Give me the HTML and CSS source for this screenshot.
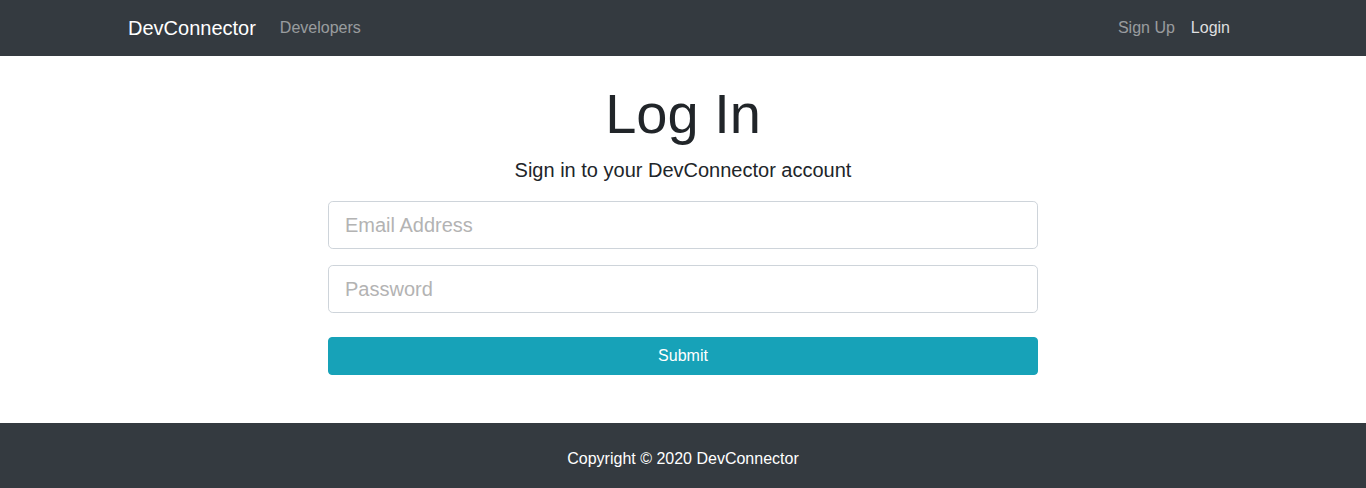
FILE: index.html
```html
<!DOCTYPE html>
<html lang="en">
<head>
    <meta charset="UTF-8">
    <meta name="viewport" content="width=device-width, initial-scale=1.0">
    <title>DevConnector</title>
    <link rel="stylesheet" href="styles.css">
</head>
<body>
    <nav class="navbar">
        <div class="container nav-inner">
            <a class="brand" href="#">DevConnector</a>
            <ul class="nav-links">
                <li><a class="nav-link" href="#">Developers</a></li>
            </ul>
            <ul class="nav-links nav-right">
                <li><a class="nav-link" href="#">Sign Up</a></li>
                <li><a class="nav-link active" href="#">Login</a></li>
            </ul>
        </div>
    </nav>

    <div class="login">
        <div class="login-box">
            <h1 class="title">Log In</h1>
            <p class="lead">Sign in to your DevConnector account</p>
            <form>
                <div class="form-group">
                    <input type="email" class="form-control" placeholder="Email Address">
                </div>
                <div class="form-group">
                    <input type="password" class="form-control" placeholder="Password">
                </div>
                <button type="button" class="btn-submit">Submit</button>
            </form>
        </div>
    </div>

    <footer class="footer">
        Copyright &copy; 2020 DevConnector
    </footer>
</body>
</html>
```

FILE: styles.css
```css
body {
    margin: 0;
    font-family: "Liberation Sans", Arial, sans-serif;
    font-size: 16px;
    line-height: 1.5;
    color: #212529;
    background: #fff;
}

a {
    text-decoration: none;
}

.container {
    width: 1110px;
    margin: 0 auto;
}

/* Navbar */
.navbar {
    background-color: #343a40;
    padding: 8px 0;
}

.nav-inner {
    display: flex;
    align-items: center;
}

.brand {
    font-size: 20px;
    line-height: 30px;
    padding: 5px 0;
    margin-right: 16px;
    color: #fff;
}

.nav-links {
    display: flex;
    list-style: none;
    margin: 0;
    padding: 0;
}

.nav-right {
    margin-left: auto;
}

.nav-link {
    display: block;
    padding: 8px;
    color: rgba(255, 255, 255, 0.5);
}

.nav-link.active {
    color: rgba(255, 255, 255, 0.85);
}

/* Login */
.login {
    padding: 24px 0 48px;
}

.login-box {
    width: 710px;
    margin: 0 auto;
    text-align: center;
}

.title {
    font-size: 56px;
    font-weight: 300;
    line-height: 1.2;
    margin: 0 0 8px;
}

.lead {
    font-size: 20px;
    font-weight: 300;
    margin: 0 0 16px;
}

.form-group {
    margin-bottom: 16px;
}

.form-control {
    display: block;
    box-sizing: border-box;
    width: 100%;
    height: 48px;
    padding: 8px 16px;
    font-family: inherit;
    font-size: 20px;
    line-height: 1.5;
    color: #495057;
    background: #fff;
    border: 1px solid #ced4da;
    border-radius: 4.8px;
    outline: none;
}

.form-control::placeholder {
    color: #b3b3b3;
}

.btn-submit {
    display: block;
    width: 100%;
    margin-top: 24px;
    padding: 6px 12px;
    font-family: inherit;
    font-size: 16px;
    line-height: 1.5;
    color: #fff;
    background-color: #17a2b8;
    border: 1px solid #17a2b8;
    border-radius: 4px;
    cursor: pointer;
}

/* Footer */
.footer {
    background-color: #343a40;
    color: #fff;
    text-align: center;
    padding: 24px;
}
```
